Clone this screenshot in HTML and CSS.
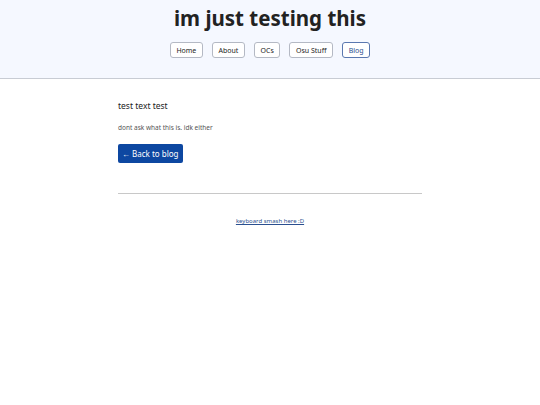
FILE: index.html
```html
<!DOCTYPE html>
<html>
<head>
<meta charset="utf-8">
<link rel="stylesheet" href="styles.css">
</head>
<body>
<header class="site-header">
  <h1 class="site-title">im just testing this</h1>
  <nav class="nav">
    <a class="nav-btn" href="#">Home</a>
    <a class="nav-btn" href="#">About</a>
    <a class="nav-btn" href="#">OCs</a>
    <a class="nav-btn" href="#">Osu Stuff</a>
    <a class="nav-btn active" href="#">Blog</a>
  </nav>
</header>
<main class="content">
  <p class="lead">test text test</p>
  <p class="small">dont ask what this is. idk either</p>
  <a class="back-btn" href="#">← Back to blog</a>
  <hr class="divider">
  <footer class="footer"><a href="#">keyboard smash here :D</a></footer>
</main>
</body>
</html>
```
FILE: styles.css
```css
* { box-sizing: border-box; }
body {
  margin: 0;
  font-family: "Noto Sans", "Open Sans", sans-serif;
  color: #222;
  background: #fff;
}
.site-header {
  background: #f5f8ff;
  border-bottom: 1px solid #c8ccd4;
  height: 79px;
  padding-top: 3px;
  text-align: center;
}
.site-title {
  margin: 0;
  font-size: 20.5px;
  font-weight: 700;
  line-height: 30px;
  color: #222;
}
.nav {
  display: flex;
  justify-content: center;
  gap: 9px;
  margin-top: 9px;
}
.nav-btn {
  display: inline-flex;
  align-items: center;
  height: 16px;
  padding: 0 5.6px;
  font-size: 7px;
  color: #222;
  text-decoration: none;
  background: #fff;
  border: 1px solid #b4b9c4;
  border-radius: 3px;
}
.nav-btn.active {
  color: #2a4f8f;
  border-color: #5a78b0;
}
.content {
  width: 304px;
  margin: 0 auto;
  padding-top: 21px;
}
.lead {
  margin: 0;
  font-size: 8.5px;
  line-height: 12px;
}
.small {
  margin: 11px 0 0;
  font-size: 6.5px;
  line-height: 10px;
  color: #555;
}
.back-btn {
  display: inline-flex;
  align-items: center;
  margin-top: 11px;
  height: 19px;
  padding: 0 4px;
  background: #0d47a1;
  color: #fff;
  font-size: 8px;
  text-decoration: none;
  border-radius: 2px;
}
.divider {
  margin: 30px 0 0;
  border: 0;
  border-top: 1px solid #c8c8c8;
}
.footer {
  text-align: center;
  margin-top: 23px;
  font-size: 6px;
}
.footer a {
  color: #2a4f8f;
}
```
